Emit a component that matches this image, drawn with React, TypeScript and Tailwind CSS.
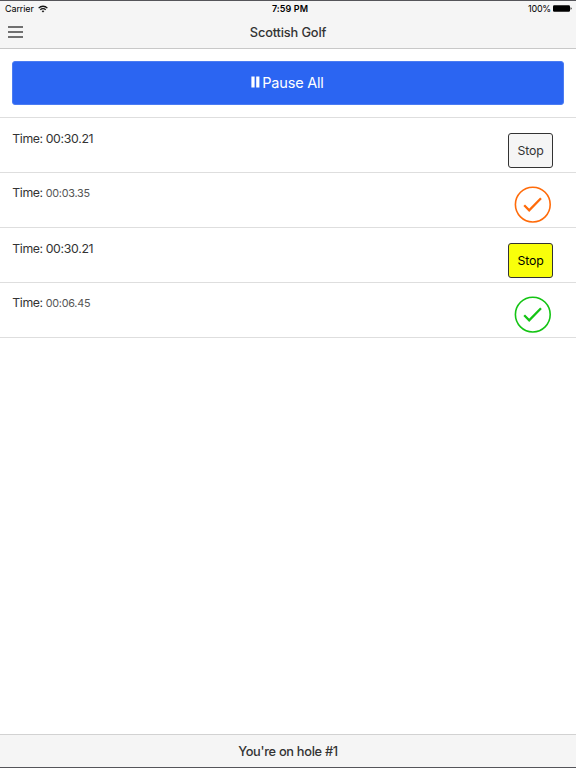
type Timer = {
  id: number;
  time: string;
  state: "idle" | "active" | "late" | "done";
};

const timers: Timer[] = [
  { id: 1, time: "00:30.21", state: "idle" },
  { id: 2, time: "00:03.35", state: "late" },
  { id: 3, time: "00:30.21", state: "active" },
  { id: 4, time: "00:06.45", state: "done" },
];

function StatusBar() {
  return (
    <div className="grid h-[15px] grid-cols-3 items-center pl-[5px] pr-1 text-[9px] text-black">
      <div className="flex items-center gap-1">
        <span className="tracking-[-0.1px]">Carrier</span>
        <svg width="10" height="8" viewBox="0 0 10 8" fill="none" stroke="#111" strokeWidth="1.3">
          <path d="M0.6 3.1a6.2 6.2 0 0 1 8.8 0" />
          <path d="M2.3 4.8a3.8 3.8 0 0 1 5.4 0" />
          <path d="M5 7.6 3.6 6.1a2 2 0 0 1 2.8 0z" fill="#111" stroke="none" />
        </svg>
      </div>
      <span className="pl-[3px] text-center font-semibold tracking-[0.1px]">7:59 PM</span>
      <div className="flex items-center justify-end gap-[2px]">
        <span className="tracking-[-0.2px]">100%</span>
        <svg width="19" height="8" viewBox="0 0 19 8">
          <rect x="0" y="0.2" width="17" height="6.6" rx="1.2" fill="#000" />
          <path d="M17.6 2.3q1 0.3 1 1.2t-1 1.2z" fill="#000" />
        </svg>
      </div>
    </div>
  );
}

function CheckButton({ className }: { className: string }) {
  return (
    <button className={`mr-[25px] mt-[13px] size-[37px] ${className}`}>
      <svg width="37" height="37" viewBox="0 0 37 37" fill="none" stroke="currentColor">
        <circle cx="18.8" cy="18.6" r="17.4" strokeWidth="1.6" />
        <path d="M10.2 19.3 15.2 24.4 27 12.2" strokeWidth="2.3" />
      </svg>
    </button>
  );
}

function StopButton({ className }: { className: string }) {
  return (
    <button
      className={`mr-[23px] mt-[15px] h-[35px] w-[45px] rounded-[3px] border pt-px text-[12.3px] tracking-[-0.15px] ${className}`}
    >
      Stop
    </button>
  );
}

function TimerRow({ timer }: { timer: Timer }) {
  const running = timer.state === "idle" || timer.state === "active";

  return (
    <li className="flex h-[55px] items-start justify-between border-b border-[#dedede] pl-[12.3px]">
      <p
        className={`text-[12.3px] leading-[18px] tracking-[-0.5px] text-[#333] ${running ? "mt-[11.5px]" : "mt-[11px]"}`}
      >
        <span className="tracking-[-0.4px]">Time:</span>{" "}
        <span
          className={
            running ? "text-[12.3px] tracking-[-0.32px]" : "text-[10.8px] tracking-[-0.25px] text-[#555]"
          }
        >
          {timer.time}
        </span>
      </p>
      {timer.state === "idle" && <StopButton className="border-[#333] bg-[#f5f5f5] text-[#333]" />}
      {timer.state === "active" && <StopButton className="border-[#333] bg-[#f9ff0a] text-black" />}
      {timer.state === "late" && <CheckButton className="text-[#ff6b0a]" />}
      {timer.state === "done" && <CheckButton className="text-[#14c414]" />}
    </li>
  );
}

export default function App() {
  return (
    <div className="flex h-screen flex-col border-y border-[#55555a] bg-white font-['Inter',sans-serif] text-[#333]">
      <header className="h-12 border-b border-[#c8c8c8] bg-[#f5f5f5]">
        <StatusBar />
        <div className="grid h-8 grid-cols-[1fr_auto_1fr] items-center px-2">
          <button aria-label="Menu">
            <svg width="15" height="12" viewBox="0 0 15 12" stroke="#444" strokeWidth="1.5">
              <path d="M0 1.1h15M0 6h15M0 10.9h15" />
            </svg>
          </button>
          <h1 className="pt-px text-[12.8px] font-medium tracking-[-0.15px]">Scottish Golf</h1>
        </div>
      </header>

      <main className="flex-1">
        <div className="border-b border-[#dedede] px-3 pb-3 pt-3">
          <button className="flex h-11 w-full items-center justify-center gap-[2px] rounded-[3px] border border-[#4b7cf2] bg-[#2b65f2] pr-px text-[14.5px] tracking-[-0.2px] text-white">
            <svg className="-mt-[2px]" width="9" height="12" viewBox="0 0 9 12" fill="currentColor">
              <path d="M0.4 0.4h3.2v11.2h-3.2zM5.2 0.4h3.2v11.2h-3.2z" />
            </svg>
            Pause All
          </button>
        </div>
        <ul>
          {timers.map((timer) => (
            <TimerRow key={timer.id} timer={timer} />
          ))}
        </ul>
      </main>

      <footer className="flex h-[33px] items-center justify-center border-t border-[#d2d2d2] bg-[#f5f5f5] pt-px text-[12.8px] font-medium tracking-[-0.3px]">
        You're on hole #1
      </footer>
    </div>
  );
}
